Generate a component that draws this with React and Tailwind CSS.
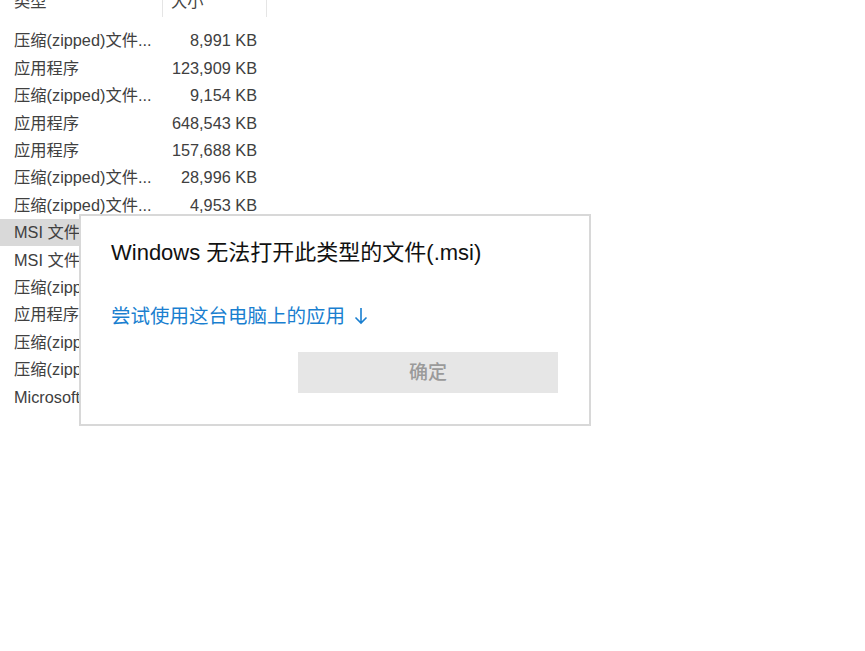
import React from 'react';

const rows = [
  { type: '压缩(zipped)文件...', size: '8,991 KB' },
  { type: '应用程序', size: '123,909 KB' },
  { type: '压缩(zipped)文件...', size: '9,154 KB' },
  { type: '应用程序', size: '648,543 KB' },
  { type: '应用程序', size: '157,688 KB' },
  { type: '压缩(zipped)文件...', size: '28,996 KB' },
  { type: '压缩(zipped)文件...', size: '4,953 KB' },
  { type: 'MSI 文件', size: '', selected: true },
  { type: 'MSI 文件', size: '' },
  { type: '压缩(zipped)文件...', size: '' },
  { type: '应用程序', size: '' },
  { type: '压缩(zipped)文件...', size: '' },
  { type: '压缩(zipped)文件...', size: '' },
  { type: 'Microsoft Edge HTML 文档', size: '' },
];

const font = { fontFamily: '"Liberation Sans", "Noto Sans CJK SC", sans-serif' };

export default function App() {
  return (
    <div className="relative w-[865px] h-[651px] bg-white overflow-hidden" style={font}>
      {/* file list */}
      <div className="w-[267px] text-[16.3px] text-[#404040]">
        <div className="flex h-[17px] overflow-hidden text-[#444]">
          <div className="w-[163px] pl-[14px] border-r border-[#e5e5e5]">
            <div className="-mt-[9px] leading-[20px]">类型</div>
          </div>
          <div className="w-[104px] pl-[8px] border-r border-[#e5e5e5]">
            <div className="-mt-[9px] leading-[20px]">大小</div>
          </div>
        </div>
        <div className="pt-[10px]">
          {rows.map((r, i) => (
            <div
              key={i}
              className={
                'flex h-[27.4px] items-center ' + (r.selected ? 'bg-[#d9d9d9]' : '')
              }
            >
              <div className="w-[163px] pl-[14px] pr-[4px] whitespace-nowrap overflow-hidden">
                {r.type}
              </div>
              <div className="w-[104px] pr-[10px] text-right whitespace-nowrap">{r.size}</div>
            </div>
          ))}
        </div>
      </div>

      {/* dialog */}
      <div className="absolute left-[79px] top-[214px] w-[512px] h-[212px] bg-white border-2 border-[#d8d8d8] flex flex-col">
        <div className="pl-[30px] pt-[22px] text-[22px] leading-[30px] text-[#111] whitespace-nowrap">
          Windows 无法打开此类型的文件(.msi)
        </div>
        <div className="pl-[30px] mt-[34px] text-[19.5px] leading-[28px] text-[#1a7fd0] flex items-center gap-[9px]">
          <span>尝试使用这台电脑上的应用</span>
          <svg width="14" height="18" viewBox="0 0 14 18" fill="none" stroke="#1a7fd0" strokeWidth="1.6">
            <path d="M7 1v15M1.5 10.5L7 16l5.5-5.5" />
          </svg>
        </div>
        <div className="flex justify-end pr-[31px] mt-[22px]">
          <div className="w-[260px] h-[41px] pt-[2px] bg-[#e6e6e6] flex items-center justify-center text-[19px] font-medium text-[#9a9a9a]">
            确定
          </div>
        </div>
      </div>
    </div>
  );
}
